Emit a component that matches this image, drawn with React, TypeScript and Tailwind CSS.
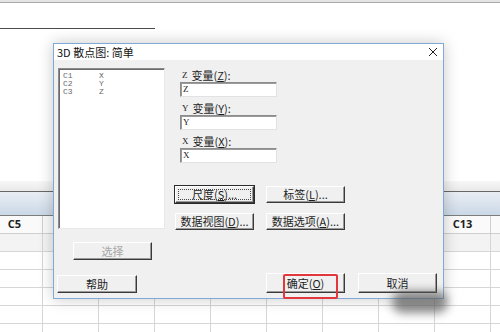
import { useState } from 'react';

// only C5 and C13 show, the rest sit under the dialog
const COLS = ['C5', '', '', '', '', '', '', '', 'C13', ''];
const ROWS = [0, 1, 2, 3, 4, 5];

const VARS = [
  { name: 'Z', key: 'Z', value: 'Z' },
  { name: 'Y', key: 'Y', value: 'Y' },
  { name: 'X', key: 'X', value: 'X' },
];

const LIST = [
  { col: 'C1', name: 'X' },
  { col: 'C2', name: 'Y' },
  { col: 'C3', name: 'Z' },
];

function Btn({
  children,
  className = '',
  disabled = false,
  focus = false,
}: {
  children: React.ReactNode;
  className?: string;
  disabled?: boolean;
  focus?: boolean;
}) {
  return (
    <div
      className={`relative w-[79px] flex items-center justify-center bg-[#f0f0f0] text-[11px] leading-none
        border-t border-l border-t-white border-l-white border-r border-b border-r-[#3a3a3a] border-b-[#3a3a3a]
        shadow-[inset_-1px_-1px_0_#9a9a9a] ${focus ? 'outline outline-1 outline-[#2a2a2a]' : ''}
        ${disabled ? 'text-[#a8a8a8]' : 'text-[#1e1e1e]'} ${className}`}>
      {focus && (
        <div className="absolute inset-[2px] border border-dotted border-[#444]" />
      )}
      {children}
    </div>
  );
}

function U({ children }: { children: React.ReactNode }) {
  return <span className="underline underline-offset-1">{children}</span>;
}

function App() {
  const [vars] = useState(VARS);

  return (
    <div
      className="relative w-[500px] h-[332px] overflow-hidden bg-white"
      style={{ fontFamily: '"Noto Sans CJK SC", "Liberation Sans", sans-serif' }}>
      {/* background window */}
      <div className="h-[2px] bg-[#e4e4e4]" />
      <div className="h-[1px] bg-[#a9a9a9]" />
      <div className="h-[25px]" />
      <div className="h-[1px] w-[155px] bg-[#4a4a4a]" />
      <div className="h-[152px]" />
      <div className="h-[10px] bg-gradient-to-b from-[#f7f7f7] to-[#e9e9e9]" />
      <div className="h-[1px] bg-[#686868]" />
      <div className="h-[23px] bg-gradient-to-b from-[#e9eef4] to-[#cbd8e6]" />
      <div className="h-[1px] bg-[#7d7d7d]" />
      <div className="ml-[-13px] grid grid-cols-[repeat(10,56px)]">
        {COLS.map((c, i) => (
          <div
            key={`h${i}`}
            className="h-[18px] flex items-center justify-center bg-[#fafafa] border-r border-b border-[#cfcfcf]
              text-[11px] font-bold text-[#222]"
            style={{ fontFamily: '"Open Sans", "Liberation Sans", sans-serif' }}>
            {c}
          </div>
        ))}
        {ROWS.map((r) =>
          COLS.map((_, i) => (
            <div
              key={`${r}-${i}`}
              className={`h-[18px] border-r border-b border-[#d6d6d6] ${r === 0 ? 'bg-[#f3f3f3]' : 'bg-white'}`}
            />
          )),
        )}
      </div>

      {/* dialog */}
      <div
        className="absolute left-[53px] top-[43px] w-[391px] h-[256px] flex flex-col border border-[#7fa9d8]
          bg-[#f0f0f0] shadow-[0_0_14px_rgba(0,0,0,0.22)]">
        <div className="h-[16px] shrink-0 flex items-center justify-between bg-white pl-[3px] pr-[5px]">
          <span className="text-[11px] text-[#111] leading-none">3D 散点图: 简单</span>
          <svg width="10" height="10" viewBox="0 0 10 10">
            <path d="M1 1 L9 9 M9 1 L1 9" stroke="#222" strokeWidth="1" />
          </svg>
        </div>

        <div className="flex-1 flex flex-col pl-[3px] pr-[6px]">
          <div className="flex">
            {/* left */}
            <div className="flex flex-col pt-[8px] pl-[1px]">
              <div
                className="w-[107px] h-[161px] bg-white border-t border-l border-t-[#8a8a8a] border-l-[#8a8a8a]
                  border-r border-b border-r-[#e8e8e8] border-b-[#e8e8e8] shadow-[inset_1px_1px_0_#6a6a6a] pt-[3px] pl-[4px]"
                style={{ fontFamily: '"Liberation Mono", monospace' }}>
                {LIST.map((l) => (
                  <div key={l.col} className="flex h-[8px] text-[8px] leading-[8px] text-[#6a6a6a]">
                    <span className="w-[36px]">{l.col}</span>
                    <span>{l.name}</span>
                  </div>
                ))}
              </div>
              <Btn disabled className="ml-[15px] mt-[13px] h-[18px]">
                选择
              </Btn>
            </div>

            {/* right */}
            <div className="flex flex-col pl-[10px] pt-[9px]">
              <div className="flex flex-col gap-[5px] pl-[5px]">
                {vars.map((v) => (
                  <div key={v.key} className="flex flex-col">
                    <div className="h-[13px] flex items-center pl-[2px] text-[11px] leading-none text-[#1e1e1e]">
                      <span
                        className="mr-[4px] text-[9px]"
                        style={{ fontFamily: '"Liberation Serif", serif' }}>
                        {v.name}
                      </span>
                      变量(<U>{v.key}</U>):
                    </div>
                    <div
                      className="w-[97px] h-[15px] bg-white border-t border-l border-t-[#8c8c8c] border-l-[#8c8c8c]
                        border-r border-b border-r-[#e2e2e2] border-b-[#e2e2e2] shadow-[inset_1px_1px_0_#9a9a9a]
                        flex items-center pl-[2px] text-[9px] text-[#222]"
                      style={{ fontFamily: '"Liberation Serif", serif' }}>
                      {v.value}
                    </div>
                  </div>
                ))}
              </div>
              <div className="grid grid-cols-[79px_79px] gap-x-[12px] gap-y-[10px] mt-[23px]">
                <Btn focus className="h-[17px]">
                  尺度(<U>S</U>)...
                </Btn>
                <Btn className="h-[17px]">
                  标签(<U>L</U>)...
                </Btn>
                <Btn className="h-[17px]">
                  数据视图(<U>D</U>)...
                </Btn>
                <Btn className="h-[17px]">
                  数据选项(<U>A</U>)...
                </Btn>
              </div>
            </div>
          </div>

          <div className="flex items-start justify-between mt-[15px]">
            <Btn className="h-[18px] w-[80px]">帮助</Btn>
            <div className="flex gap-[13px] -mt-[2px]">
              <Btn className="h-[20px]">
                确定(<U>O</U>)
                <div className="absolute left-[16px] top-0 w-[55px] h-[25px] border-2 border-[#e2373d] rounded-[2px]" />
              </Btn>
              <Btn className="h-[20px]">取消</Btn>
            </div>
          </div>
        </div>
      </div>

      {/* blurred cursor smear */}
      <div className="absolute left-[392px] top-[291px] w-[56px] h-[22px] rounded-full bg-[#5a5a5a] opacity-70 blur-[5px]" />
    </div>
  );
}

export default App;
